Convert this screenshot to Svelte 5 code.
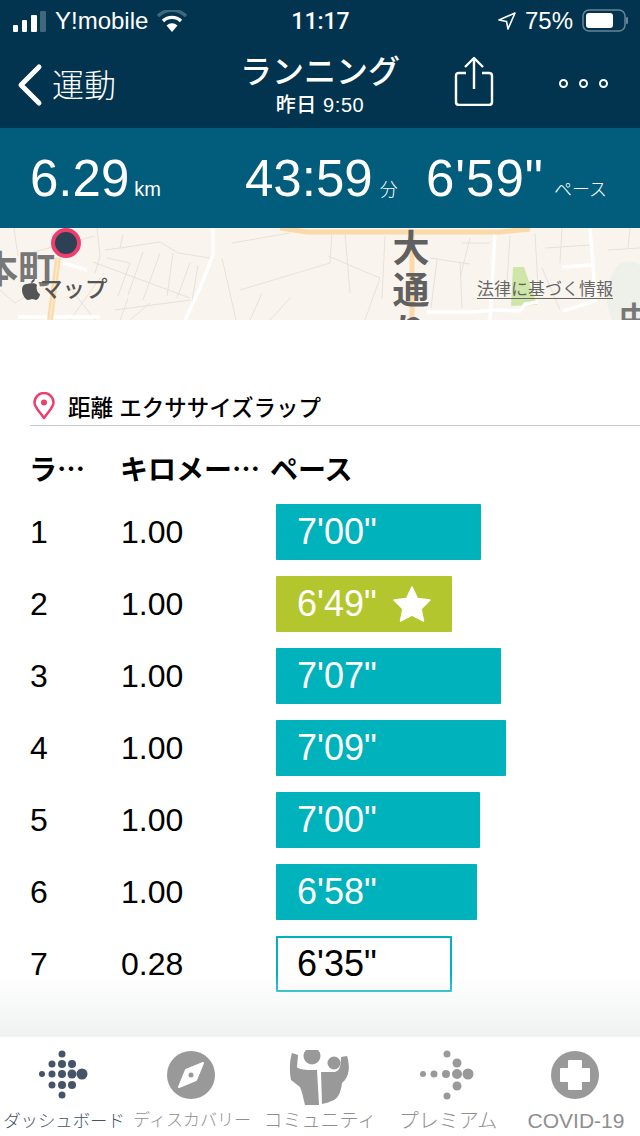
<script>
  const laps = [
    { lap: 1, km: '1.00', pace: `7'00"`, width: 205 },
    { lap: 2, km: '1.00', pace: `6'49"`, width: 176, best: true },
    { lap: 3, km: '1.00', pace: `7'07"`, width: 225 },
    { lap: 4, km: '1.00', pace: `7'09"`, width: 230 },
    { lap: 5, km: '1.00', pace: `7'00"`, width: 204 },
    { lap: 6, km: '1.00', pace: `6'58"`, width: 201 },
    { lap: 7, km: '0.28', pace: `6'35"`, width: 176, partial: true },
  ];

  // dots of the fitbit logo: x, y, r
  const dashDots = [
    [62, 4, 3.5],
    [52, 14, 3.5], [62, 14, 4], [72, 14, 4],
    [42, 24, 3], [52, 24, 3.5], [62, 24, 4], [72, 24, 4.5], [82, 24, 5.5],
    [52, 35, 3.5], [62, 35, 4], [72, 35, 4],
    [62, 45, 3.5],
  ];
  const premiumDots = [
    [63, 4, 3.5], [73, 13, 4.5], [39, 24, 3], [50, 24, 3.5], [62, 24, 4], [73, 24, 5], [84, 24, 5.5], [73, 36, 4.5], [63, 46, 3.5],
  ];
</script>

<div class="screen">
  <header class="top">
    <div class="status">
      <div class="status-left">
        <svg width="33" height="21" viewBox="0 0 33 21">
          <rect x="0" y="14" width="5" height="7" rx="1" fill="#fff" />
          <rect x="9" y="9" width="5" height="12" rx="1" fill="#fff" />
          <rect x="18" y="4" width="6" height="17" rx="1" fill="#fff" />
          <rect x="27" y="0" width="6" height="21" rx="1" fill="#fff" opacity="0.25" />
        </svg>
        <span class="carrier">Y!mobile</span>
        <svg width="30" height="22" viewBox="0 0 30 22">
          <path d="M1 6 A20 20 0 0 1 29 6" fill="none" stroke="#fff" stroke-width="3.4" opacity="0.25" />
          <path d="M6 11 A13 13 0 0 1 24 11" fill="none" stroke="#fff" stroke-width="3.4" />
          <path d="M15 22 L9.500 15.500 A8 8 0 0 1 20.500 15.500 Z" fill="#fff" />
        </svg>
      </div>
      <span class="clock">11:17</span>
      <div class="status-right">
        <svg width="18" height="18" viewBox="0 0 18 18">
          <path d="M1 8 L17 1 L10 17 L8.500 9.500 Z" fill="none" stroke="#fff" stroke-width="1.600" stroke-linejoin="round" />
        </svg>
        <span class="battery-pct">75%</span>
        <svg width="46" height="24" viewBox="0 0 46 24">
          <rect x="1" y="1" width="42" height="21" rx="6" fill="none" stroke="#fff" stroke-opacity="0.4" stroke-width="1.500" />
          <rect x="4" y="4" width="27" height="15" rx="3" fill="#fff" />
          <rect x="44" y="8" width="2" height="7" rx="1" fill="#fff" opacity="0.4" />
        </svg>
      </div>
    </div>
    <nav class="nav">
      <div class="back">
        <svg width="28" height="44" viewBox="0 0 28 44">
          <path d="M23 4 L5 22 L23 40" fill="none" stroke="#fff" stroke-width="5" stroke-linecap="round" stroke-linejoin="round" />
        </svg>
        <span>運動</span>
      </div>
      <div class="title">
        <strong>ランニング</strong>
        <small>昨日 9:50</small>
      </div>
      <div class="actions">
        <svg class="share" width="40" height="50" viewBox="0 0 40 50">
          <path d="M12 17 H5 Q2 17 2 20 V46 Q2 49 5 49 H35 Q38 49 38 46 V20 Q38 17 35 17 H28" fill="none" stroke="#fff" stroke-width="2.400" />
          <path d="M20 33 V4 M11 11 L20 2 L29 11" fill="none" stroke="#fff" stroke-width="2.400" stroke-linejoin="round" />
        </svg>
        <div class="more"><i></i><i></i><i></i></div>
      </div>
    </nav>
  </header>

  <section class="stats">
    <div class="stat s1"><b>6.29</b><span class="latin">km</span></div>
    <div class="stat s2"><b>43:59</b><span>分</span></div>
    <div class="stat s3"><b>6'59"</b><span>ペース</span></div>
  </section>

  <div class="map">
    <svg width="640" height="92" viewBox="0 0 640 92">
      <rect width="640" height="92" fill="#f9f5ee" />
      <g fill="none" stroke="#e6e2d9" stroke-width="1">
        <path d="M93 34 L190 70 M143 24 L128 67 M160 25 L143 72 M173 25 L167 68 M190 35 L177 70 M198 37 L192 73 M105 22 L120 20 L123 6 M120 20 L160 14 L178 25 L210 30 M107 30 L130 35 L118 68 M128 70 L120 92 M150 75 L130 92 M115 82 L190 72 M97 0 L100 28 L95 45 M30 25 L95 8 M14 0 L18 28 M0 62 L15 75 L40 60 M70 60 L95 92 M100 50 L70 92" />
        <path d="M232 15 L290 5 M222 30 L236 92 M240 62 L330 35 L332 4 M262 65 L250 92 M290 70 L270 92 M328 28 L380 50 L365 92 M345 5 L350 65 M385 8 L382 70 M430 30 L470 36 M437 32 L431 80 M460 35 L462 80 M462 15 L490 15 M470 10 L460 50 M510 8 L506 70 M535 5 L538 60 M545 20 L590 17 M562 0 L560 35 M608 22 L640 20 M630 0 L628 20 M600 60 L640 50 M542 40 L560 82" />
      </g>
      <path d="M620 35 Q640 30 640 40 V92 H612 Q598 60 620 35 Z" fill="#eef0ea" />
      <path d="M513 39 L524 39 L537 77 L511 78 Z" fill="#cfe6a8" />
      <g fill="none" stroke="#fff" stroke-width="3.500">
        <path d="M213 0 V27 L200 60 L185 92" />
        <path d="M63 35 L87 42" />
        <path d="M18 89 H100" />
        <path d="M495 4 L490 92" />
        <path d="M590 0 L593 37 L562 39 M593 37 L595 73 L563 83" />
        <path d="M427 84 H473 L497 82 L520 83 L525 76 L538 74" />
      </g>
      <path d="M58 30 L50 92" fill="none" stroke="#fbdcae" stroke-width="6" />
      <path d="M58 30 L50 92" fill="none" stroke="#fff" stroke-width="1" opacity="0.5" />
      <path d="M280 0 L307 4 H500 L530 1" fill="none" stroke="#fbd9a8" stroke-width="5" />
      <path d="M412 4 V92" fill="none" stroke="#fbd9a8" stroke-width="5" />
      <text class="map-town" x="-19" y="55" font-size="37">本町</text>
      <text class="map-road" x="411" y="34" font-size="37">大</text>
      <text class="map-road" x="411" y="76" font-size="37">通</text>
      <text class="map-road" x="411" y="118" font-size="37">り</text>
      <text class="map-town" x="619" y="100" font-size="30">中</text>
      <path transform="translate(0 -9)" d="M37 66 C34 63 29 65 27 65 C24 65 22 67 22 71 C22 76 26 81 28 81 C30 81 31 80 32 80 C34 80 35 81 36 81 C38 81 40 77 40 75 C37 74 36 69 37 66 Z M31 64 C31 62 33 60 35 60 C35 62 33 64 31 64 Z" fill="#555" />
      <text class="map-mark" x="40" y="69" font-size="22.500">マップ</text>
      <text class="map-legal" x="477" y="67" font-size="17">法律に基づく情報</text>
      <path d="M477 70.500 H613" stroke="#666" stroke-width="1" />
      <circle cx="66" cy="15" r="13" fill="#2d4154" stroke="#ef3d6e" stroke-width="4" />
    </svg>
  </div>

  <main class="content">
    <div class="section-title">
      <svg width="22" height="28" viewBox="0 0 22 28">
        <path d="M11 26 C7 20 1.500 15.500 1.500 10.500 A9.500 9.500 0 0 1 20.500 10.500 C20.500 15.500 15 20 11 26 Z" fill="none" stroke="#ef3d6e" stroke-width="2.500" stroke-linejoin="round" />
        <circle cx="11" cy="10.500" r="3" fill="#ef3d6e" />
      </svg>
      <span>距離 エクササイズラップ</span>
    </div>

    <div class="lap-head">
      <span class="col-lap">ラ…</span>
      <span class="col-km">キロメー…</span>
      <span>ペース</span>
    </div>

    {#each laps as row}
      <div class="lap-row">
        <span class="col-lap">{row.lap}</span>
        <span class="col-km">{row.km}</span>
        <div
          class="bar"
          class:best={row.best}
          class:partial={row.partial}
          style="width:{row.width}px"
        >
          <span>{row.pace}</span>
          {#if row.best}
            <svg width="40" height="38" viewBox="0 0 40 38">
              <path d="M20 2 L25.500 13.500 L38 15 L29 24 L31.500 36 L20 30 L8.500 36 L11 24 L2 15 L14.500 13.500 Z" fill="#fff" stroke="#fff" stroke-width="1.500" stroke-linejoin="round" />
            </svg>
          {/if}
        </div>
      </div>
    {/each}
    <div class="fade"></div>
  </main>

  <footer class="tabs">
    <div class="tab active">
      <svg width="128" height="56" viewBox="0 0 128 56">
        {#each dashDots as [x, y, r]}
          <circle cx={x} cy={y} {r} fill="#46546a" />
        {/each}
      </svg>
      <span>ダッシュボード</span>
    </div>
    <div class="tab">
      <svg width="128" height="56" viewBox="128 0 128 56">
        <circle cx="191" cy="25" r="24" fill="#999" />
        <path d="M203 13 L196 30 L179 37 L186 20 Z" fill="#fff" stroke="#fff" stroke-linejoin="round" stroke-width="2" />
        <circle cx="191" cy="25" r="2.500" fill="#999" />
      </svg>
      <span>ディスカバリー</span>
    </div>
    <div class="tab">
      <svg width="128" height="56" viewBox="256 0 128 56">
        <g fill="#999" transform="translate(0 -3)">
          <circle cx="312" cy="9" r="8.500" />
          <circle cx="334" cy="16" r="6.500" />
          <path d="M292 6 L298 8 L297 20 C298 22 304 23 310 23 L317 23 L319 58 H305 C303 50 302 44 300 40 L291 33 C289 22 290 12 292 6 Z" />
          <path d="M321 25 H334 C339 25 341 20 341 10 L347 9 C350 18 350 30 342 36 C341 44 339 50 334 53 C330 55 326 56 322 57 Z" />
        </g>
      </svg>
      <span>コミュニティ</span>
    </div>
    <div class="tab">
      <svg width="128" height="56" viewBox="0 0 128 56">
        {#each premiumDots as [x, y, r]}
          <circle cx={x} cy={y} {r} fill="#999" />
        {/each}
      </svg>
      <span>プレミアム</span>
    </div>
    <div class="tab">
      <svg width="128" height="56" viewBox="512 0 128 56">
        <circle cx="575" cy="25" r="24" fill="#999" />
        <path d="M569 11 H581 V19 H589 V31 H581 V39 H569 V31 H561 V19 H569 Z" fill="#fff" stroke="#fff" stroke-linejoin="round" stroke-width="2" />
      </svg>
      <span>COVID-19</span>
    </div>
  </footer>
</div>

<style>
  :global(body) {
    margin: 0;
  }
  .screen {
    width: 640px;
    height: 1136px;
    display: flex;
    flex-direction: column;
    overflow: hidden;
    background: #fff;
    font-family: "Liberation Sans", "Noto Sans CJK JP", sans-serif;
    color: #000;
  }
  .top {
    background: #02344f;
    height: 128px;
    color: #fff;
    flex: none;
  }
  .status {
    height: 42px;
    display: grid;
    grid-template-columns: 1fr auto 1fr;
    align-items: center;
    padding: 0 12px 0 13px;
    font-size: 24px;
  }
  .status-left,
  .status-right {
    display: flex;
    align-items: center;
    gap: 9px;
  }
  .status-right {
    justify-content: flex-end;
    gap: 9px;
  }
  .clock {
    font-family: "Roboto", "Liberation Sans", sans-serif;
    font-weight: 500;
    font-size: 23px;
  }
  .nav {
    height: 86px;
    display: grid;
    grid-template-columns: 1fr auto 1fr;
    align-items: center;
  }
  .back {
    display: flex;
    align-items: center;
    gap: 8px;
    padding-left: 16px;
    font-size: 32px;
    font-weight: 300;
  }
  .back span {
    padding-bottom: 5px;
  }
  .title {
    display: flex;
    flex-direction: column;
    align-items: center;
  }
  .title strong {
    font-size: 32px;
    font-weight: 500;
    line-height: 40px;
  }
  .title small {
    font-size: 20px;
    font-weight: 500;
    line-height: 26px;
    letter-spacing: 0.6px;
  }
  .actions {
    display: flex;
    align-items: center;
    justify-content: space-between;
    padding: 0 32px 0 54px;
  }
  .share {
    margin-bottom: 8px;
  }
  .more {
    display: flex;
    gap: 11px;
    margin-bottom: 4px;
  }
  .more i {
    display: block;
    width: 9px;
    height: 9px;
    box-sizing: border-box;
    border: 2px solid #fff;
    border-radius: 50%;
  }
  .stats {
    height: 100px;
    flex: none;
    background: #025c7b;
    color: #fff;
    display: flex;
    align-items: baseline;
    padding-top: 21px;
    box-sizing: border-box;
  }
  .stat {
    display: flex;
    align-items: baseline;
    gap: 7px;
  }
  .stat b {
    font-weight: 400;
    font-size: 51px;
    line-height: 60px;
  }
  .stat span {
    font-size: 18px;
    font-weight: 300;
  }
  .stat .latin {
    font-size: 20px;
  }
  .s1 {
    margin-left: 30px;
    width: 215px;
    gap: 5px;
  }
  .s2 {
    width: 181px;
  }
  .s3 {
    gap: 10px;
  }
  .s3 b {
    letter-spacing: 1px;
  }
  .map {
    height: 92px;
    flex: none;
    overflow: hidden;
    line-height: 0;
  }
  .map-town {
    fill: #777;
    font-weight: 700;
  }
  .map-road {
    fill: #606060;
    font-weight: 700;
    text-anchor: middle;
  }
  .map-mark {
    fill: #555;
    font-weight: 500;
  }
  .map-legal {
    fill: #666;
  }
  .content {
    flex: 1;
    position: relative;
    padding-top: 68px;
  }
  .section-title {
    margin-left: 30px;
    height: 37px;
    box-sizing: content-box;
    display: flex;
    align-items: center;
    gap: 13px;
    padding-left: 3px;
    border-bottom: 1px solid #ccc;
    font-size: 22.5px;
    font-weight: 500;
  }
  .section-title span {
    padding-bottom: 2px;
  }
  .section-title svg {
    margin-bottom: 2px;
  }
  .lap-head {
    display: flex;
    align-items: center;
    height: 50px;
    margin-top: 17px;
    margin-bottom: 3px;
    padding-left: 29px;
    font-family: "Noto Sans CJK JP", sans-serif;
    font-size: 28px;
    font-weight: 700;
    line-height: 1;
  }
  .col-lap {
    width: 91px;
  }
  .col-km {
    width: 150px;
  }
  .lap-row {
    display: flex;
    align-items: center;
    height: 72px;
    padding-left: 30px;
    font-size: 32px;
  }
  .bar {
    height: 56px;
    margin-left: 5px;
    box-sizing: border-box;
    background: #00b2bb;
    color: #fff;
    display: flex;
    align-items: center;
    gap: 15px;
    padding-left: 21px;
    font-size: 36px;
    border-radius: 1px;
  }
  .bar.best {
    background: #b4c62e;
  }
  .bar.partial {
    background: #fff;
    color: #000;
    border: 2px solid #00b2bb;
    padding-left: 19px;
  }
  .fade {
    position: absolute;
    left: 0;
    right: 0;
    bottom: 0;
    height: 62px;
    background: linear-gradient(rgba(240, 241, 241, 0), #f0f1f1);
    pointer-events: none;
  }
  .tabs {
    height: 99px;
    flex: none;
    background: #fff;
    padding-top: 13px;
    box-sizing: border-box;
    display: grid;
    grid-template-columns: repeat(5, 128px);
  }
  .tab {
    display: flex;
    flex-direction: column;
    align-items: center;
    font-weight: 300;
    color: #8f8f8f;
    white-space: nowrap;
  }
  .tab svg {
    display: block;
    flex: none;
  }
  .tab span {
    height: 30px;
    line-height: 30px;
    font-size: 20px;
  }
  .tab.active {
    color: #46546a;
  }
  .tab:nth-child(1) span {
    font-size: 17.4px;
  }
  .tab:nth-child(2) span {
    font-size: 17px;
  }
  .tab:nth-child(3) span {
    font-size: 19px;
  }
  .tab:nth-child(5) span {
    font-size: 21px;
  }
</style>
